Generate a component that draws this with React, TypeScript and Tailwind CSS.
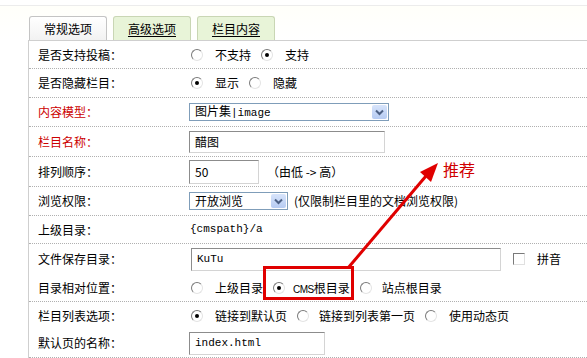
import React from 'react';

const cn = "font-['SimSun','Noto_Sans_CJK_SC',sans-serif]";

const Radio: React.FC<{ checked?: boolean; label: React.ReactNode; first?: boolean; gap?: string }> = ({
  checked,
  label,
  first,
  gap = 'ml-[12px]',
}) => (
  <span className={`inline-flex items-center ${first ? 'ml-[2px]' : 'ml-[10px]'}`}>
    <span className="relative inline-flex h-[12px] w-[12px] items-center justify-center rounded-full border border-t-[#7a7a7a] border-l-[#7a7a7a] border-r-[#e4e4e4] border-b-[#e4e4e4] bg-white">
      {checked && <span className="h-[4px] w-[4px] rounded-full bg-black" />}
    </span>
    <span className={gap}>{label}</span>
  </span>
);

const Select: React.FC<{ value: string; w: string; mono?: boolean }> = ({ value, w, mono }) => (
  <div className={`flex h-[18px] items-center border border-[#7f9db9] bg-white ${w}`}>
    <span className="flex-1 truncate pl-[5px] leading-[16px]">
      {value}
      {mono && <span className="font-['Liberation_Mono',monospace] text-[11px]">|image</span>}
    </span>
    <span className="mr-[1px] flex h-[14px] w-[15px] items-center justify-center rounded-[2px] bg-gradient-to-b from-[#d7e4fb] to-[#b6cbf2]">
      <svg width="9" height="7" viewBox="0 0 9 7">
        <path d="M1 1.5 L4.5 5 L8 1.5" fill="none" stroke="#4d6185" strokeWidth="2" />
      </svg>
    </span>
  </div>
);

const Input: React.FC<{ value: string; w: string; h?: string; mono?: boolean }> = ({ value, w, h = 'h-[22px]', mono }) => (
  <div
    className={`flex items-center border border-t-[#8c8c8c] border-l-[#8c8c8c] border-r-[#d4d4d4] border-b-[#d4d4d4] bg-white pl-[5px] ${w} ${h} ${
      mono ? "font-['Liberation_Mono',monospace] text-[11px]" : ''
    }`}
  >
    {value}
  </div>
);

const Row: React.FC<{ label: string; red?: boolean; h: string; line?: boolean; children: React.ReactNode }> = ({
  label,
  red,
  h,
  line = true,
  children,
}) => (
  <div className={`flex items-center ${h} ${line ? 'border-b border-dotted border-[#b0b0b0]' : ''}`}>
    <div className={`w-[160px] pl-[9px] ${red ? 'text-[#cc0000]' : 'text-black'}`}>{label}</div>
    <div className="flex flex-1 items-center">{children}</div>
  </div>
);

export default function App() {
  return (
    <div className={`relative h-[358px] w-[587px] overflow-hidden bg-white text-[12px] text-black ${cn}`}>
      <div className="pt-[5px]">
        <div className="flex items-end gap-[6px] border-t border-[#ececec] bg-gradient-to-b from-[#fffffa] to-white pl-[29px] pt-[10px]">
          <div className="flex h-[24px] w-[78px] items-center justify-center rounded-t-[3px] border border-b-0 border-[#c4c4c4] bg-gradient-to-b from-white to-[#f2f2f2]">
            常规选项
          </div>
          <div className="flex h-[24px] w-[78px] items-center justify-center rounded-t-[3px] border border-b-0 border-[#c9d6b4] bg-[#e8f4d8] underline underline-offset-2">
            高级选项
          </div>
          <div className="flex h-[24px] w-[78px] items-center justify-center rounded-t-[3px] border border-b-0 border-[#c9d6b4] bg-[#e8f4d8] underline underline-offset-2">
            栏目内容
          </div>
        </div>
      </div>

      <div className="ml-[28px] border-l border-t border-[#cfcfcf]">
        <Row label="是否支持投稿：" h="h-[28px]">
          <Radio first label="不支持" />
          <Radio checked label="支持" />
        </Row>
        <Row label="是否隐藏栏目：" h="h-[29px]">
          <Radio first checked label="显示" />
          <Radio label="隐藏" />
        </Row>
        <Row label="内容模型：" red h="h-[29px]">
          <Select value="图片集" mono w="w-[200px]" />
        </Row>
        <Row label="栏目名称：" red h="h-[30px]">
          <Input value="醋图" w="w-[196px]" />
        </Row>
        <Row label="排列顺序：" h="h-[30px]">
          <Input value="50" w="w-[70px]" h="h-[24px]" />
          <span className="ml-[8px]">（由低 -&gt; 高）</span>
        </Row>
        <Row label="浏览权限：" h="h-[29px]">
          <Select value="开放浏览" w="w-[99px]" />
          <span className="ml-[6px]">(仅限制栏目里的文档浏览权限)</span>
        </Row>
        <Row label="上级目录：" h="h-[28px]">
          <span className="pl-[1px] font-['Liberation_Mono',monospace] text-[11px]">{'{cmspath}/a'}</span>
        </Row>
        <Row label="文件保存目录：" h="h-[30px]" line={false}>
          <span className="ml-[2px]">
            <Input value="KuTu" w="w-[310px]" h="h-[23px]" mono />
          </span>
          <span className="ml-[12px] h-[12px] w-[12px] border border-t-[#7a7a7a] border-l-[#7a7a7a] border-r-[#e0e0e0] border-b-[#e0e0e0] bg-white" />
          <span className="ml-[12px]">拼音</span>
        </Row>
        <Row label="目录相对位置：" h="h-[28px]">
          <Radio first label="上级目录" />
          <Radio
            checked
            gap="ml-[8px]"
            label={
              <>
                <span className="font-['Liberation_Sans',sans-serif] text-[10px] tracking-[-0.5px]">CMS</span>根目录
              </>
            }
          />
          <Radio gap="ml-[10px]" label="站点根目录" />
        </Row>
        <Row label="栏目列表选项：" h="h-[27px]" line={false}>
          <Radio first checked label="链接到默认页" />
          <Radio label="链接到列表第一页" gap="ml-[10px]" />
          <Radio label="使用动态页" />
        </Row>
        <Row label="默认页的名称：" h="h-[29px]">
          <Input value="index.html" w="w-[136px]" h="h-[23px]" mono />
        </Row>
      </div>

      {/* annotation */}
      <div className="absolute left-[263px] top-[266px] h-[34px] w-[91px] border-[3px] border-[#e00000]" />
      <svg className="absolute left-0 top-0" width="587" height="358">
        <line x1="348" y1="268" x2="426" y2="176" stroke="#e00000" strokeWidth="3" />
        <polygon points="438,163 420,172 431,182" fill="#e00000" />
      </svg>
      <div className="absolute left-[443px] top-[159px] text-[16px] leading-[20px] text-[#d00000]">推荐</div>
    </div>
  );
}
